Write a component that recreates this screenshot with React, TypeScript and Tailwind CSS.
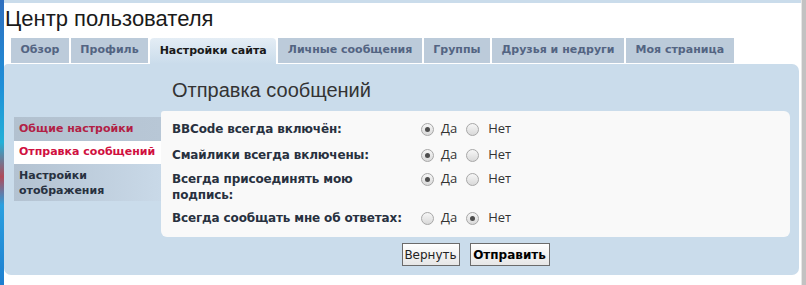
import React from "react";

const tabs = [
  "Обзор",
  "Профиль",
  "Настройки сайта",
  "Личные сообщения",
  "Группы",
  "Друзья и недруги",
  "Моя страница",
];

function Radio({ checked }: { checked?: boolean }) {
  return (
    <span className="w-[13px] h-[13px] rounded-full border border-[#a7a7a7] bg-[linear-gradient(#f6f6f6,#d9d9d9)] flex items-center justify-center shrink-0">
      {checked && <span className="w-[5px] h-[5px] rounded-full bg-[#4d4d4d]" />}
    </span>
  );
}

function YesNo({ yes }: { yes: boolean }) {
  return (
    <div className="flex items-center h-[16px] text-[13px] text-[#333] [font-family:'Open_Sans',sans-serif]">
      <Radio checked={yes} />
      <span className="ml-[7px]">Да</span>
      <span className="ml-[9px]"><Radio checked={!yes} /></span>
      <span className="ml-[9px]">Нет</span>
    </div>
  );
}

function Row({ label, yes, className }: { label: React.ReactNode; yes: boolean; className?: string }) {
  return (
    <div className={"flex items-start " + (className ?? "")}>
      <div className="w-[260px] pl-[11px] whitespace-nowrap font-bold text-[12px] leading-[16px] text-[#28313f] tracking-[-0.15px]">
        {label}
      </div>
      <YesNo yes={yes} />
    </div>
  );
}

export default function App() {
  return (
    <div className="w-[806px] h-[285px] bg-white flex overflow-hidden [font-family:'DejaVu_Sans',Verdana,sans-serif]">
      <div className="w-[4px] h-full bg-[linear-gradient(to_bottom,#2f6fbf,#1f8fd8_30%,#23b0d8_50%,#b04a5a_62%,#2aa0e0_72%,#1e7fd0)]" />
      <div className="w-[797px] flex flex-col">
        <div className="h-[3px] bg-[#cadceb]" />
        <div className="pl-[1px] pt-[3px] h-[35px] text-[22px] leading-[26px] text-[#1a1a1a] [font-family:'Liberation_Sans',Arial,sans-serif]">
          Центр пользователя
        </div>
        <div className="flex gap-[2px] pl-[7px] h-[26px]">
          {tabs.map((t, i) =>
            i === 2 ? (
              <div
                key={t}
                className="h-[26px] px-[9.5px] flex items-center rounded-t-[4px] bg-[linear-gradient(#e4edf5,#cadceb)] text-[11px] font-bold text-[#1a1a1a]"
              >
                {t}
              </div>
            ) : (
              <div
                key={t}
                className="h-[25px] px-[9.5px] flex items-center bg-[#bccbda] text-[11px] font-bold text-[#536482]"
              >
                {t}
              </div>
            )
          )}
        </div>
        <div className="mr-[2px] h-[211px] bg-[#cadceb] rounded-[7px] rounded-tl-[4px] flex flex-col">
          <div className="pl-[168px] pt-[14px] h-[47px] text-[20px] leading-[24px] text-[#333] [font-family:'Liberation_Sans',Arial,sans-serif]">
            Отправка сообщений
          </div>
          <div className="flex pl-[10px]">
            <div className="w-[147px] mt-[6px] flex flex-col text-[11px] font-bold">
              <div className="h-[24px] pl-[5px] flex items-center bg-[linear-gradient(to_right,#b2c1cf,#b8c7d6)] text-[#b21f45]">
                Общие настройки
              </div>
              <div className="h-[23px] pl-[5px] flex items-center bg-white text-[#d0103f]">
                Отправка сообщений
              </div>
              <div className="h-[37px] pl-[5px] flex items-center leading-[15px] bg-[linear-gradient(to_right,#b3c2d1,#c9d9e8)] text-[#28313f]">
                Настройки отображения
              </div>
            </div>
            <div className="flex flex-col items-center">
              <div className="w-[629px] h-[126px] bg-[#f9f9f9] rounded-[6px] rounded-tl-[3px] pt-[10px] flex flex-col">
                <Row label="BBCode всегда включён:" yes={true} />
                <Row label="Смайлики всегда включены:" yes={true} className="mt-[10px]" />
                <Row
                  label={
                    <>
                      Всегда присоединять мою
                      <br />
                      подпись:
                    </>
                  }
                  yes={true}
                  className="mt-[8px]"
                />
                <Row label="Всегда сообщать мне об ответах:" yes={false} className="mt-[7px]" />
              </div>
              <div className="flex gap-[10px] mt-[6px]">
                <button className="h-[23px] w-[58px] border border-[#6b6b6b] bg-[linear-gradient(#ffffff,#e6e6e6)] text-[12px] text-[#222] [font-family:'DejaVu_Sans',Verdana,sans-serif]">
                  Вернуть
                </button>
                <button className="h-[23px] w-[80px] border border-[#6b6b6b] bg-[linear-gradient(#ffffff,#e6e6e6)] text-[12px] font-bold text-black [font-family:'DejaVu_Sans',Verdana,sans-serif]">
                  Отправить
                </button>
              </div>
            </div>
          </div>
        </div>
      </div>
      <div className="w-[1px] h-full bg-[#e6e6e6]" />
      <div className="w-[4px] h-full bg-[#c2c2c2]" />
    </div>
  );
}
